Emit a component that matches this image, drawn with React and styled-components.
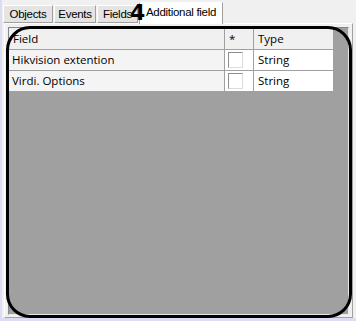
import { Fragment } from "react";
import styled, { createGlobalStyle } from "styled-components";

const GlobalStyle = createGlobalStyle`
  body {
    margin: 0;
    background: #dcdcf4;
  }
`;

const Window = styled.div`
  position: relative;
  width: 354px;
  height: 318px;
  margin-left: 2px;
  background: #f0f0f0;
  font-family: "Liberation Sans", Arial, sans-serif;
  display: flex;
  flex-direction: column;
  padding: 2px 2px 0 2px;
  box-sizing: border-box;
`;

const TabStrip = styled.div`
  display: flex;
  align-items: flex-end;
  height: 21px;
  margin-left: -1px;
  position: relative;
  z-index: 1;
`;

const Tab = styled.div`
  box-sizing: border-box;
  width: ${(p) => p.$width}px;
  height: ${(p) => (p.$active ? "22px" : "18px")};
  margin-bottom: ${(p) => (p.$active ? "-1px" : "0")};
  margin-right: ${(p) => (p.$active ? "0" : "1px")};
  padding-top: ${(p) => (p.$active ? "3px" : "2px")};
  text-align: center;
  background: ${(p) => (p.$active ? "#ffffff" : "#e4e4e4")};
  border: 1px solid #a0a0a0;
  border-bottom: ${(p) => (p.$active ? "none" : "1px solid #a0a0a0")};
  border-left-color: ${(p) => (p.$active ? "#a0a0a0" : "#ffffff")};
  border-top-color: #ffffff;
  font-size: 11.5px;
  letter-spacing: -0.3px;
  color: #000;
  white-space: nowrap;
`;

const Panel = styled.div`
  flex: 1;
  width: 349px;
  box-sizing: border-box;
  border: 1px solid #a0a0a0;
  border-top-color: #ffffff;
  border-left-color: #ffffff;
  background: #f0f0f0;
  padding: 3px 3px 2px 3px;
  display: flex;
`;

const Grid = styled.div`
  flex: 1;
  background: #a0a0a0;
  border: 1px solid #828790;
  border-right-color: #e8e8e8;
  border-bottom-color: #e8e8e8;
  font-family: "Open Sans", "Noto Sans", sans-serif;
  font-size: 11.5px;
`;

const Table = styled.div`
  display: grid;
  grid-template-columns: 216px 29px 80px;
  grid-auto-rows: 21px;
  grid-template-rows: 22px;
  width: 325px;
`;

const HeadCell = styled.div`
  box-sizing: border-box;
  background: #f0f0f0;
  border-right: 1px solid #a0a0a0;
  border-bottom: 1px solid #a0a0a0;
  padding: 3px 0 0 4px;
  color: #000;
`;

const Cell = styled.div`
  box-sizing: border-box;
  background: ${(p) => (p.$first ? "#f4f4f4" : "#ffffff")};
  border-right: 1px solid #a0a0a0;
  border-bottom: 1px solid #a0a0a0;
  padding: 2px 0 0 ${(p) => (p.$first ? "3px" : "4px")};
  color: #000;
  display: flex;
  align-items: flex-start;
`;

const CheckBox = styled.span`
  display: block;
  width: 13px;
  height: 14px;
  margin-left: -1px;
  border: 1px solid #8c8c8c;
  border-right-color: #dcdcdc;
  border-bottom-color: #dcdcdc;
  background: #ffffff;
`;

const Marker = styled.div`
  position: absolute;
  left: 4px;
  top: 26px;
  width: 346px;
  height: 292px;
  box-sizing: border-box;
  border: 3px solid #000;
  border-radius: 24px;
  pointer-events: none;
  z-index: 2;
`;

const Number = styled.div`
  position: absolute;
  left: 128px;
  top: 1px;
  font-family: "DejaVu Sans", sans-serif;
  font-weight: bold;
  font-size: 22px;
  line-height: 24px;
  color: #000;
  z-index: 3;
`;

const tabs = [
  { label: "Objects", width: 50 },
  { label: "Events", width: 42 },
  { label: "Fields", width: 41 },
];

const rows = [
  { name: "Hikvision extention", type: "String" },
  { name: "Virdi. Options", type: "String" },
];

export default function App() {
  return (
    <>
      <GlobalStyle />
      <Window>
        <TabStrip>
          {tabs.map((tab) => (
            <Tab key={tab.label} $width={tab.width}>
              {tab.label}
            </Tab>
          ))}
          <Tab $active $width={84}>
            Additional field
          </Tab>
        </TabStrip>
        <Panel>
          <Grid>
            <Table>
              <HeadCell>Field</HeadCell>
              <HeadCell>*</HeadCell>
              <HeadCell>Type</HeadCell>
              {rows.map((row) => (
                <Fragment key={row.name}>
                  <Cell $first>{row.name}</Cell>
                  <Cell>
                    <CheckBox />
                  </Cell>
                  <Cell>{row.type}</Cell>
                </Fragment>
              ))}
            </Table>
          </Grid>
        </Panel>
        <Number>4</Number>
        <Marker />
      </Window>
    </>
  );
}
